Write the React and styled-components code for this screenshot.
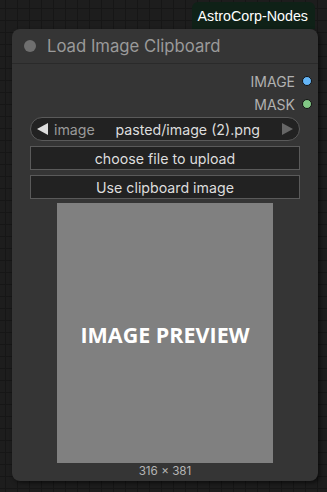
import styled, { createGlobalStyle } from 'styled-components';

const GlobalStyle = createGlobalStyle`
  html, body {
    margin: 0;
    padding: 0;
    width: 327px;
    height: 492px;
    overflow: hidden;
  }
  body {
    font-family: Inter, "Liberation Sans", Arial, sans-serif;
    background-color: #1d1d1d;
    background-image:
      linear-gradient(to right, #161616 1px, transparent 1px),
      linear-gradient(to bottom, #161616 1px, transparent 1px);
    background-size: 12px 12px;
    background-position: 5px 8px;
  }
`;

function Triangle({ dir, color }) {
  const points = dir === 'left' ? '11,0 11,12 0,6' : '0,0 0,12 11,6';
  return (
    <Tri viewBox="0 0 11 12">
      <polygon points={points} fill={color} />
    </Tri>
  );
}

export default function App() {
  return (
    <>
      <GlobalStyle />
      <Canvas>
        <BadgeRow>
          <Badge>AstroCorp-Nodes</Badge>
        </BadgeRow>
        <Node>
          <TitleBar>
            <TitleDot />
            <Title>Load Image Clipboard</Title>
          </TitleBar>
          <Body>
            <Outputs>
              <Output>
                IMAGE <Slot $color="#64b5f6" />
              </Output>
              <Output>
                MASK <Slot $color="#81c784" />
              </Output>
            </Outputs>
            <Combo>
              <Triangle dir="left" color="#dddddd" />
              <ComboLabel>image</ComboLabel>
              <ComboValue>pasted/image (2).png</ComboValue>
              <Triangle dir="right" color="#666666" />
            </Combo>
            <Button>choose file to upload</Button>
            <Button>Use clipboard image</Button>
            <Preview>IMAGE PREVIEW</Preview>
            <Size>316 × 381</Size>
          </Body>
        </Node>
      </Canvas>
    </>
  );
}

const Canvas = styled.div`
  display: flex;
  flex-direction: column;
  padding: 2px 9px 0 12px;
`;

const BadgeRow = styled.div`
  display: flex;
  justify-content: flex-end;
  margin-right: 3px;
`;

const Badge = styled.div`
  height: 27px;
  padding: 0 7px 0 6px;
  display: flex;
  align-items: center;
  background: #0f2117;
  border-radius: 6px 6px 0 0;
  color: #ffffff;
  font-family: "Liberation Sans", Arial, sans-serif;
  font-size: 14.3px;
`;

const Node = styled.div`
  width: 306px;
  height: 452px;
  background: #353535;
  border-radius: 8px;
  box-shadow: 2px 2px 4px rgba(0, 0, 0, 0.55);
  display: flex;
  flex-direction: column;
`;

const TitleBar = styled.div`
  height: 34px;
  display: flex;
  align-items: center;
  gap: 11px;
  padding-left: 12px;
  border-bottom: 1px solid #2a2a2a;
`;

const TitleDot = styled.div`
  width: 12px;
  height: 12px;
  border-radius: 50%;
  background: #6f6f6f;
`;

const Title = styled.div`
  color: #9a9a9a;
  font-size: 16.7px;
`;

const Body = styled.div`
  display: flex;
  flex-direction: column;
  align-items: center;
  padding: 8px 0 0;
`;

const Outputs = styled.div`
  align-self: stretch;
  display: flex;
  flex-direction: column;
  align-items: flex-end;
  padding-right: 6px;
  gap: 5px;
  margin-bottom: 4px;
`;

const Output = styled.div`
  display: flex;
  align-items: center;
  gap: 7px;
  height: 18px;
  color: #b0b0b0;
  font-size: 14px;
`;

const Slot = styled.span`
  width: 8px;
  height: 8px;
  border-radius: 50%;
  background: ${(p) => p.$color};
  border: 1px solid #111;
`;

const Combo = styled.div`
  width: 270px;
  height: 24px;
  box-sizing: border-box;
  display: flex;
  align-items: center;
  padding: 0 6px 0 6px;
  background: #222222;
  border: 1px solid #5a5a5a;
  border-radius: 12px;
  font-size: 14.2px;
`;

const Tri = styled.svg`
  width: 11px;
  height: 12px;
  flex: none;
`;

const ComboLabel = styled.span`
  color: #9a9a9a;
  margin-left: 6px;
`;

const ComboValue = styled.span`
  flex: 1;
  text-align: right;
  color: #dddddd;
  padding-right: 22px;
`;

const Button = styled.div`
  width: 270px;
  height: 24px;
  box-sizing: border-box;
  margin-top: 5px;
  display: flex;
  align-items: center;
  justify-content: center;
  background: #222222;
  border: 1px solid #5a5a5a;
  color: #dddddd;
  font-size: 14.2px;
`;

const Preview = styled.div`
  width: 216px;
  height: 260px;
  margin-top: 4px;
  background: #808080;
  display: flex;
  align-items: center;
  justify-content: center;
  color: #ffffff;
  font-family: "Open Sans", "Noto Sans", sans-serif;
  font-weight: 700;
  font-size: 21.5px;
  padding-top: 3px;
  box-sizing: border-box;
`;

const Size = styled.div`
  margin-top: 1px;
  color: #b5b5b5;
  font-size: 11.7px;
`;
